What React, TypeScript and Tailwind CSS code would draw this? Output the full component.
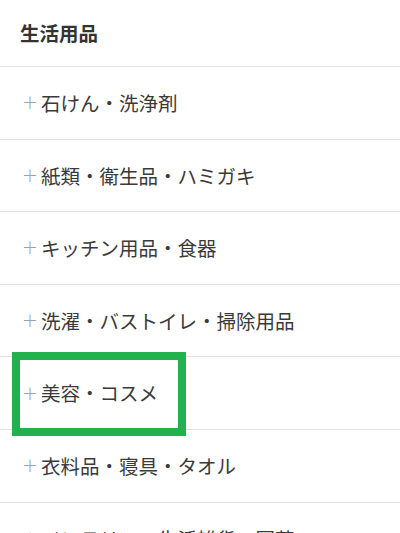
import React from "react";

const items = [
  "石けん・洗浄剤",
  "紙類・衛生品・ハミガキ",
  "キッチン用品・食器",
  "洗濯・バストイレ・掃除用品",
  "美容・コスメ",
  "衣料品・寝具・タオル",
  "インテリア・生活雑貨・園芸",
];

export default function App() {
  return (
    <div
      className="relative w-[400px] bg-white text-[#3a3a3a]"
      style={{ fontFamily: '"Noto Sans CJK JP", "Noto Sans", sans-serif' }}
    >
      <div className="flex h-[67px] items-center border-b border-[#e3e3e3] pl-5 text-[19.5px] font-bold leading-none text-[#333333]">
        生活用品
      </div>
      {items.map((t) => (
        <div
          key={t}
          className="flex h-[72.6px] items-center border-b border-[#e3e3e3] pl-5 text-[19.5px] leading-none"
        >
          <span
            className="w-5 text-center text-[19px] font-extralight text-[#a0a0a0]"
            style={{ fontFamily: '"DejaVu Sans", sans-serif' }}
          >
            +
          </span>
          <span className="pl-[1px]">{t}</span>
        </div>
      ))}
      <div className="pointer-events-none absolute left-[12px] top-[352px] h-[84px] w-[174px] border-[8px] border-[#22b14c]" />
    </div>
  );
}
